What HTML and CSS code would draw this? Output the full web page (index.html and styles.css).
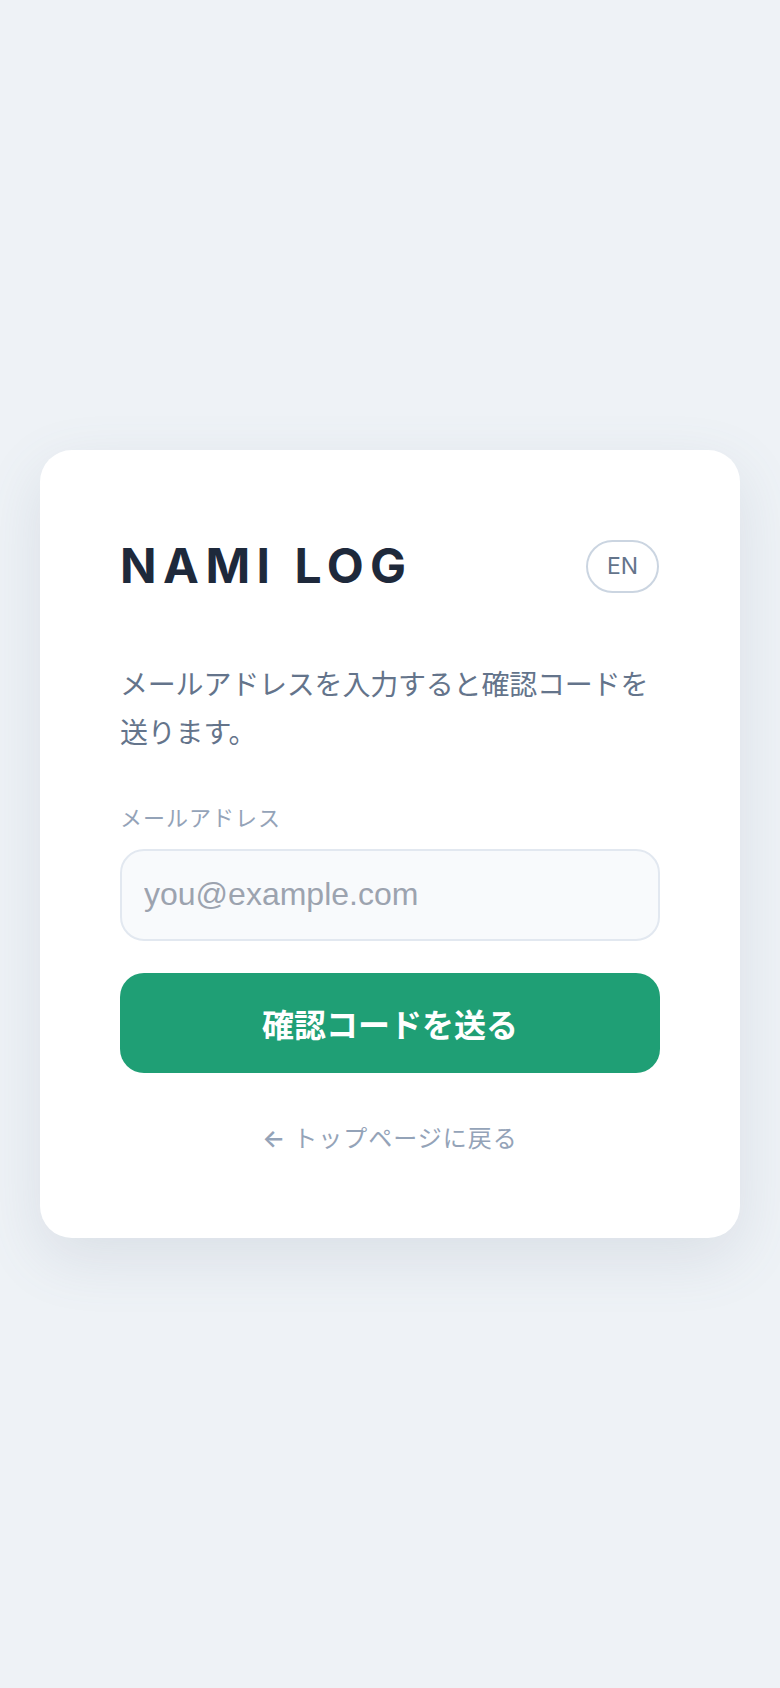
FILE: index.html
```html
<!DOCTYPE html>
<html lang="ja">
<head>
<meta charset="utf-8">
<meta name="viewport" content="width=device-width, initial-scale=1">
<title>NAMI LOG</title>
<link rel="stylesheet" href="styles.css">
</head>
<body>
  <main class="page">
    <section class="card">
      <header class="card-header">
        <h1 class="logo">NAMI LOG</h1>
        <button class="lang" type="button">EN</button>
      </header>
      <p class="lead">メールアドレスを入力すると確認コードを送ります。</p>
      <form class="form">
        <label class="label" for="email">メールアドレス</label>
        <input class="input" id="email" type="email" placeholder="you@example.com">
        <button class="submit" type="button">確認コードを送る</button>
      </form>
      <a class="back" href="#"><span class="arrow">←</span>トップページに戻る</a>
    </section>
  </main>
</body>
</html>
```

FILE: styles.css
```css
* {
  box-sizing: border-box;
}

html, body {
  margin: 0;
  padding: 0;
}

body {
  background: #eef2f6;
  font-family: "Inter", "Noto Sans CJK JP", sans-serif;
  color: #1e293b;
}

.page {
  min-height: 100vh;
  display: flex;
  align-items: center;
  justify-content: center;
  padding: 0 40px;
}

.card {
  width: 700px;
  background: #ffffff;
  border-radius: 32px;
  padding: 80px 80px 80px;
  box-shadow: 0 20px 60px rgba(100, 116, 139, 0.14);
  display: flex;
  flex-direction: column;
}

.card-header {
  display: flex;
  align-items: center;
  justify-content: space-between;
  height: 72px;
  margin-bottom: 60px;
}

.logo {
  margin: 0;
  font-family: "Inter", sans-serif;
  font-size: 48px;
  font-weight: 700;
  line-height: 72px;
  letter-spacing: 0.135em;
  color: #1e293b;
}

.lang {
  width: 73px;
  height: 53px;
  border: 2px solid #cbd5e1;
  border-radius: 999px;
  background: #ffffff;
  color: #64748b;
  font-family: "Inter", sans-serif;
  font-size: 23px;
  font-weight: 400;
  padding: 0;
  margin-right: 1px;
}

.lead {
  margin: 0 0 44px;
  font-size: 28px;
  line-height: 1.7;
  letter-spacing: -0.2px;
  color: #64748b;
}

.form {
  display: flex;
  flex-direction: column;
}

.label {
  font-size: 22px;
  line-height: 33px;
  letter-spacing: 1px;
  color: #94a3b8;
  margin-bottom: 14px;
}

.input {
  width: 100%;
  height: 92px;
  border: 2px solid #e2e8f0;
  border-radius: 24px;
  background: #f8fafc;
  padding: 0 22px;
  font-family: "Liberation Sans", "Inter", sans-serif;
  font-size: 32px;
  color: #1e293b;
  outline: none;
  margin-bottom: 32px;
}

.input::placeholder {
  color: #9ca3af;
}

.submit {
  width: 100%;
  height: 100px;
  border: none;
  border-radius: 24px;
  background: #1f9f75;
  color: #ffffff;
  font-family: "Inter", "Noto Sans CJK JP", sans-serif;
  font-size: 32px;
  font-weight: 700;
  margin-bottom: 46px;
}

.back {
  align-self: center;
  display: flex;
  align-items: center;
  font-size: 24px;
  line-height: 39px;
  letter-spacing: 1px;
  color: #94a3b8;
  text-decoration: none;
}

.arrow {
  font-family: "Inter", sans-serif;
  font-size: 24px;
  font-weight: 600;
  margin-right: 8px;
  letter-spacing: 0;
}
```
